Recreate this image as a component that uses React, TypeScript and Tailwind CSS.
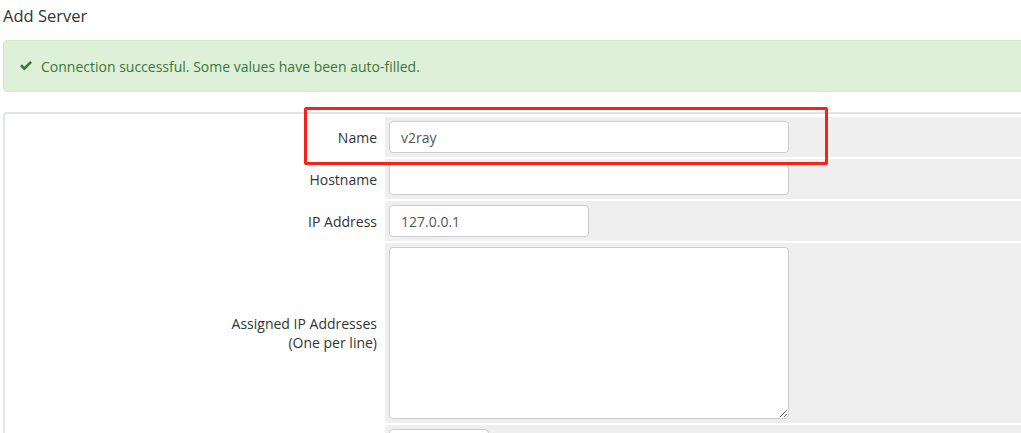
import React from "react";

const font = { fontFamily: '"Open Sans", "Liberation Sans", sans-serif' };

function Row({ label, children }: { label: React.ReactNode; children: React.ReactNode }) {
  return (
    <>
      <div className="flex items-center justify-end pr-[6px] text-right text-[14px] leading-[19px] text-[#333]">
        {label}
      </div>
      <div className="flex items-center bg-[#efefef] p-[4px]">{children}</div>
    </>
  );
}

const inputCls =
  "h-[32px] rounded-[4px] border border-[#ccc] bg-white px-[11px] text-[14px] text-[#555] outline-none";

export default function App() {
  return (
    <div className="relative h-[433px] w-[1021px] overflow-hidden bg-white" style={font}>
      <div className="w-[1040px] pl-[3px]">
        {/* Header */}
        <h1 className="h-[40px] pt-[3px] text-[16.5px] leading-[26px] text-[#333]">Add Server</h1>

        {/* Success alert */}
        <div className="flex h-[52px] items-center gap-[8px] rounded-[4px] border border-[#d6e9c6] bg-[#dff0d8] pl-[15px] text-[14px] text-[#3c763d]">
          <svg width="14" height="12" viewBox="0 0 14 12" className="shrink-0">
            <path d="M1 6.2 L2.9 4.3 L5.3 6.7 L11.1 0.9 L13 2.8 L5.3 10.5 Z" fill="#3c763d" />
          </svg>
          <span>Connection successful. Some values have been auto-filled.</span>
        </div>

        {/* Form */}
        <div className="mt-[20px] rounded-t-[4px] border-2 border-b-0 border-[#e1e5e8]">
          <div className="grid grid-cols-[376px_1fr] gap-[2px] p-[2px] pt-[3px]">
            <Row label="Name">
              <input defaultValue="v2ray" className={`${inputCls} w-[400px]`} style={font} />
            </Row>
            <Row label="Hostname">
              <input className={`${inputCls} w-[400px]`} style={font} />
            </Row>
            <Row label="IP Address">
              <input defaultValue="127.0.0.1" className={`${inputCls} w-[200px]`} style={font} />
            </Row>
            <Row label={<span>Assigned IP Addresses<br />(One per line)</span>}>
              <textarea
                className="h-[172px] w-[400px] rounded-[4px] border border-[#ccc] bg-white px-[11px] py-[6px] text-[14px] text-[#555] outline-none"
                style={font}
              />
            </Row>
            <Row label="">
              <input className={`${inputCls} w-[100px]`} style={font} />
            </Row>
          </div>
        </div>
      </div>

      {/* Red highlight box */}
      <div className="absolute left-[304px] top-[107px] h-[58px] w-[524px] rounded-[2px] border-[3px] border-[#f5221b]" />
    </div>
  );
}
